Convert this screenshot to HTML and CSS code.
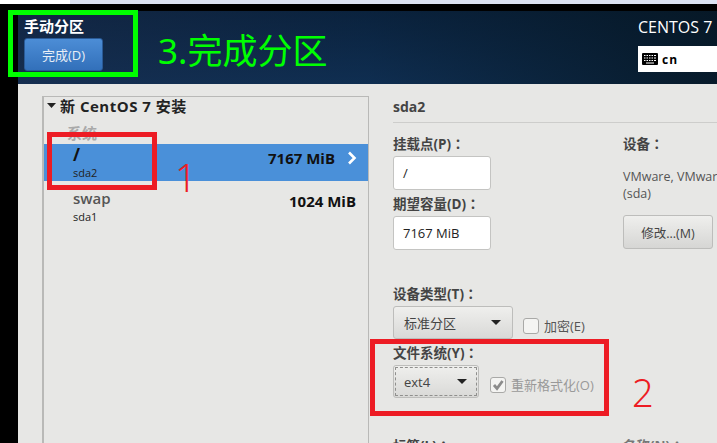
FILE: index.html
```html
<!DOCTYPE html>
<html lang="zh-CN">
<head>
    <meta charset="UTF-8">
    <title>手动分区</title>
    <link rel="stylesheet" href="styles.css">
</head>
<body>

    <div class="strip"><div class="strip-white"></div></div>

    <div class="shell">
        <header class="header">
            <div class="spoke">
                <div class="spoke-title">手动分区</div>
                <button class="done-btn">完成(D)</button>
            </div>
            <div class="product">
                <div class="product-name">CENTOS 7</div>
                <div class="layout-box">
                    <svg class="kbd-icon" width="16" height="12" viewBox="0 0 16 12">
                        <rect width="16" height="12" rx="1" fill="#000"/>
                        <path d="M2 2.5h1.500M4.500 2.500H6M7 2.500h1.500M9.500 2.500H11M12 2.500h2M2 5h1.500M4.500 5H6M7 5h1.500M9.500 5H11M12 5h2M2 7.500h1.500M4.500 7.500H6M7 7.500h1.500M9.500 7.500H11M12 7.500h2M4 10h8" stroke="#fff" stroke-width="1.200" fill="none"/>
                    </svg>
                    <span>cn</span>
                </div>
            </div>
        </header>

        <main class="content">
            <section class="mounts">
                <div class="install-title">
                    <svg class="expander" width="9" height="5" viewBox="0 0 9 5"><path d="M0 0h9L4.500 5z" fill="#222"/></svg>
                    新 CentOS 7 安装
                </div>
                <div class="group-name">系统</div>
                <div class="mount-row selected">
                    <div>
                        <div class="mount-name">/</div>
                        <div class="mount-dev">sda2</div>
                    </div>
                    <div class="mount-size">7167 MiB</div>
                    <svg class="chevron" width="10" height="14" viewBox="0 0 10 14"><path d="M2 1.500 7.500 7 2 12.500" stroke="#fff" stroke-width="2.600" fill="none"/></svg>
                </div>
                <div class="mount-row plain">
                    <div>
                        <div class="mount-name">swap</div>
                        <div class="mount-dev">sda1</div>
                    </div>
                    <div class="mount-size">1024 MiB</div>
                </div>
            </section>

            <section class="details">
                <h2 class="details-title">sda2</h2>
                <div class="details-grid">
                    <div class="col-left">
                        <label class="field-label">挂载点(P)<span lang="zh-TW">：</span></label>
                        <div class="text-input">/</div>
                        <label class="field-label size-label">期望容量(D)<span lang="zh-TW">：</span></label>
                        <div class="text-input">7167 MiB</div>
                    </div>
                    <div class="col-right">
                        <label class="field-label">设备<span lang="zh-TW">：</span></label>
                        <p class="device-text">VMware, VMware Virtual S<br>(sda)</p>
                        <button class="modify-btn">修改...(M)</button>
                    </div>
                </div>

                <label class="field-label type-label">设备类型(T)<span lang="zh-TW">：</span></label>
                <div class="select-row">
                    <div class="select type-select">
                        <span>标准分区</span>
                        <svg width="10" height="5" viewBox="0 0 10 5"><path d="M0 0h10L5 5z" fill="#222"/></svg>
                    </div>
                    <div class="check-wrap">
                        <span class="checkbox"></span>
                        <span class="check-text">加密(E)</span>
                    </div>
                </div>

                <label class="field-label fs-label">文件系统(Y)<span lang="zh-TW">：</span></label>
                <div class="select-row">
                    <div class="select fs-select">
                        <span>ext4</span>
                        <svg width="10" height="5" viewBox="0 0 10 5"><path d="M0 0h10L5 5z" fill="#222"/></svg>
                    </div>
                    <div class="check-wrap disabled">
                        <span class="checkbox">
                            <svg width="14" height="14" viewBox="0 0 14 14"><path d="M3 7 6 10.500 11.500 3" stroke="#8c8c8c" stroke-width="2.800" fill="none"/></svg>
                        </span>
                        <span class="check-text">重新格式化(O)</span>
                    </div>
                </div>

                <div class="bottom-labels">
                    <label class="field-label tag-label">标签(L)<span lang="zh-TW">：</span></label>
                    <label class="field-label name-label">名称(N)<span lang="zh-TW">：</span></label>
                </div>
            </section>
        </main>
    </div>

    <!-- hand drawn notes on top of the screenshot -->
    <div class="note green-box"></div>
    <div class="note green-text">3.完成分区</div>
    <div class="note red-box red-one"></div>
    <div class="note red-num num-one">1</div>
    <div class="note red-box red-two"></div>
    <div class="note red-num num-two">2</div>

</body>
</html>
```

FILE: styles.css
```css
* {
    box-sizing: border-box;
}

html, body {
    margin: 0;
    height: 443px;
    overflow: hidden;
}

body {
    position: relative;
    background-color: #000;
    font-family: "Open Sans", "Noto Sans CJK SC", sans-serif;
    color: #333;
}

.strip {
    height: 4px;
    background-color: #dde3f3;
}

.strip-white {
    width: 70px;
    height: 4px;
    background-color: #fff;
}

.shell {
    margin-top: 7px;
    padding-left: 18px;
}

.header {
    height: 73px;
    display: flex;
    justify-content: space-between;
    color: #fff;
    background:
        linear-gradient(90deg, rgba(22, 44, 78, 0.7), rgba(10, 42, 78, 0.5) 50%, rgba(6, 24, 38, 0.9)),
        linear-gradient(180deg, #0a1a2c, #143254);
}

.spoke {
    padding: 5px 0 0 6px;
}

.spoke-title {
    font-size: 15px;
    font-weight: bold;
    line-height: 20px;
}

.done-btn {
    display: block;
    width: 79px;
    height: 33px;
    margin-top: 2px;
    padding-bottom: 2px;
    border: 1px solid #2a5a96;
    border-radius: 3px;
    background: linear-gradient(180deg, #4c8dd6, #3270ba);
    color: #e8eef6;
    font-family: inherit;
    font-size: 13px;
}

.product {
    width: 79px;
    padding-top: 5px;
}

.product-name {
    font-size: 16px;
    line-height: 22px;
    white-space: nowrap;
}

.layout-box {
    display: flex;
    align-items: center;
    height: 26px;
    margin-top: 8px;
    padding-left: 4px;
    gap: 4px;
    background-color: #fff;
    color: #000;
    font-size: 12px;
    font-weight: bold;
    letter-spacing: 1px;
}

.content {
    display: flex;
    height: 400px;
    background-color: #e7e7e5;
}

.mounts {
    width: 327px;
    height: 400px;
    margin: 12px 0 0 24px;
    border: solid #b9b9b7;
    border-width: 1px 1px 0 2px;
}

.install-title {
    display: flex;
    align-items: center;
    gap: 4px;
    height: 20px;
    margin-top: -2px;
    padding-left: 3px;
    font-size: 15px;
    font-weight: bold;
    letter-spacing: 0.5px;
    color: #222;
}

.group-name {
    height: 29px;
    padding: 9px 0 0 23px;
    font-size: 15px;
    line-height: 18px;
    font-weight: bold;
    color: #a9a9a9;
}

.mount-row {
    display: flex;
    align-items: flex-start;
    height: 37px;
    padding: 0 0 0 29px;
    color: #555;
}

.mount-row.selected {
    background-color: #4a90d9;
    color: #111;
    padding-right: 11px;
}

.mount-name {
    font-size: 15px;
    line-height: 18px;
    padding-top: 8px;
    font-weight: 600;
}

.mount-row.selected .mount-name {
    font-size: 17px;
    font-weight: bold;
    padding-top: 2px;
}

.mount-dev {
    font-size: 11px;
    line-height: 14px;
    color: #222;
}

.mount-row.plain .mount-dev {
    margin-top: 3px;
}

.mount-row.selected .mount-dev {
    margin-top: 2px;
}

.mount-size {
    margin-left: auto;
    margin-right: 12px;
    padding-top: 5px;
    font-size: 15px;
    line-height: 18px;
    font-weight: bold;
    color: #111;
}

.mount-row.plain .mount-size {
    padding-top: 11px;
}

.chevron {
    margin-top: 7px;
}

.details {
    flex: 1;
    min-width: 0;
    margin-left: 24px;
}

.details-title {
    height: 39px;
    margin: 0;
    padding-top: 13px;
    border-bottom: 1px solid #cdcdcb;
    font-size: 14px;
    line-height: 20px;
    color: #444;
}

.details-grid {
    display: flex;
    gap: 132px;
    padding-top: 11px;
}

.col-left {
    width: 98px;
    flex-shrink: 0;
}

.field-label {
    display: block;
    height: 22px;
    font-family: "Open Sans", "Noto Sans CJK TC", sans-serif;
    font-size: 13.5px;
    line-height: 20px;
    font-weight: bold;
    color: #444;
    white-space: nowrap;
}

.text-input {
    height: 34px;
    padding: 0 9px;
    border: 1px solid #c4c4c2;
    border-radius: 3px;
    background-color: #fff;
    font-size: 13px;
    line-height: 32px;
    color: #222;
}

.size-label {
    margin-top: 4px;
}

.col-right {
    white-space: nowrap;
}

.device-text {
    margin: 12px 0 0;
    font-size: 12.5px;
    line-height: 17px;
    color: #555;
}

.modify-btn {
    display: block;
    width: 90px;
    height: 34px;
    margin-top: 13px;
    border: 1px solid #bdbdbb;
    border-radius: 3px;
    background: linear-gradient(180deg, #efefed, #d6d6d4);
    font-family: inherit;
    font-size: 12.5px;
    color: #444;
}

.type-label {
    margin-top: 34px;
}

.select-row {
    display: flex;
    align-items: flex-end;
}

.select {
    display: flex;
    align-items: center;
    justify-content: space-between;
    height: 33px;
    padding: 0 11px 0 10px;
    border: 1px solid #bdbdbb;
    border-radius: 3px;
    background: linear-gradient(180deg, #efefed, #d9d9d7);
    font-size: 13px;
    color: #444;
}

.type-select {
    width: 120px;
}

.fs-select {
    width: 86px;
    outline: 1px dashed #8f8f8d;
    outline-offset: -3px;
}

.check-wrap {
    display: flex;
    align-items: center;
    gap: 5px;
    margin-bottom: 4px;
    margin-left: 10px;
    font-size: 13px;
    color: #555;
}

.check-wrap.disabled {
    margin-left: 11px;
    color: #999;
}

.checkbox {
    width: 16px;
    height: 16px;
    border: 1px solid #a9a9a7;
    border-radius: 3px;
    background-color: #f4f4f2;
}

.checkbox svg {
    display: block;
}

.fs-label {
    margin-top: 4px;
}

.bottom-labels {
    display: flex;
    margin-top: 38px;
}

.tag-label {
    width: 230px;
}

.name-label {
    color: #777;
}

.note {
    position: absolute;
}

.green-box {
    left: 8px;
    top: 10px;
    width: 130px;
    height: 67px;
    border: 5px solid #0f0;
}

.green-text {
    left: 158px;
    top: 29px;
    font-family: "Noto Sans", "Noto Sans CJK SC", sans-serif;
    font-size: 35px;
    line-height: 44px;
    color: #0f0;
    white-space: nowrap;
}

.red-box {
    border: 5px solid #ed1c24;
}

.red-one {
    left: 47px;
    top: 132px;
    width: 110px;
    height: 58px;
}

.red-two {
    left: 370px;
    top: 339px;
    width: 239px;
    height: 77px;
}

.red-num {
    font-family: "Noto Sans", sans-serif;
    font-size: 38px;
    font-weight: 300;
    line-height: 44px;
    color: #ed1c24;
}

.num-one {
    left: 175px;
    top: 155px;
}

.num-two {
    left: 632px;
    top: 370px;
}
```
